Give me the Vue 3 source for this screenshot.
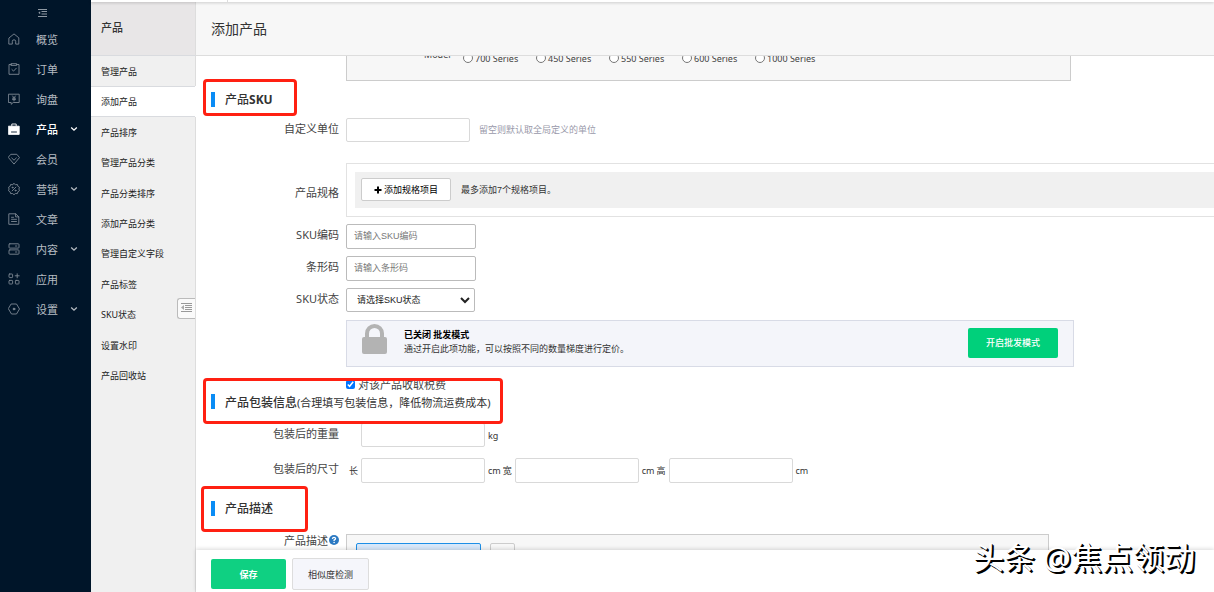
<script setup>
import { ref } from 'vue'

const menu = [
  { name: '概览', icon: 'home' },
  { name: '订单', icon: 'order' },
  { name: '询盘', icon: 'inquiry' },
  { name: '产品', icon: 'product', more: true, active: true },
  { name: '会员', icon: 'member' },
  { name: '营销', icon: 'marketing', more: true },
  { name: '文章', icon: 'article' },
  { name: '内容', icon: 'content', more: true },
  { name: '应用', icon: 'apps' },
  { name: '设置', icon: 'settings', more: true }
]
const subMenu = ['管理产品', '添加产品', '产品排序', '管理产品分类', '产品分类排序', '添加产品分类', '管理自定义字段', '产品标签', 'SKU状态', '设置水印', '产品回收站']
const models = ['700 Series', '450 Series', '550 Series', '600 Series', '1000 Series']
const model = ref('')
const taxed = ref(true)
</script>

<template>
  <div class="app">
    <aside class="side">
      <button class="fold" type="button" aria-label="收起菜单">
        <svg width="9" height="8" viewBox="0 0 9 8" fill="none" stroke="currentColor"><path d="M0 .5h9M3.500 2.500H9M3.500 5H9M0 7.500h9"/><path d="M2.200 2.200v3L.3 3.700z" fill="currentColor" stroke="none"/></svg>
      </button>
      <nav>
        <a v-for="m in menu" :key="m.name" href="#" class="item" :class="{ on: m.active }">
          <svg class="ico" viewBox="0 0 12 12" fill="none" stroke="currentColor" stroke-width=".9" stroke-linejoin="round" stroke-linecap="round">
            <path v-if="m.icon === 'home'" d="M1.200 4.800L6 .9l4.800 3.900v6.300H7.700V8.300Q7.700 6.800 6 6.800T4.300 8.300v2.800H1.200z"/>
            <g v-else-if="m.icon === 'order'"><path d="M3.300 1.500H1v9.800h10V1.500H8.700M3.300.7h5.400v1.700H3.300zM3.900 6.500l1.600 1.600 2.800-2.900"/></g>
            <g v-else-if="m.icon === 'inquiry'"><path d="M.8 1.200h10.400v8.300H5.200L3.200 11.300V9.500H.8zM4.600 3l1.400 1.900L7.400 3M6 4.900v3M4.500 5.200h3M4.500 6.600h3"/></g>
            <g v-else-if="m.icon === 'product'"><path d="M.8 3.200h10.400v8.200H.8z" fill="currentColor"/><path d="M3.800 3V1h4.400v2"/><path d="M3.500 9h5" stroke="#001529"/></g>
            <g v-else-if="m.icon === 'member'"><path d="M3.200 1.300h5.600L11.500 4.600 6 11.100.5 4.600zM3.700 5L6 7.200 8.300 5"/></g>
            <g v-else-if="m.icon === 'marketing'"><path d="M6 .5l1.500 1.200 1.900-.2.500 1.800 1.600 1-.6 1.700.6 1.700-1.600 1.100-.5 1.800-1.900-.1L6 11.700l-1.500-1.200-1.900.1-.5-1.800L.5 7.700 1.100 6 .5 4.300l1.600-1 .5-1.800 1.900.2zM4.100 7.900l3.800-3.800"/><circle cx="4.500" cy="4.600" r=".5"/><circle cx="7.500" cy="7.500" r=".5"/></g>
            <g v-else-if="m.icon === 'article'"><path d="M1.200.8h6.500l3.100 3v7.500H1.200zM7.600.9v3h3.100M3.500 4.300h2M3.500 6.300h5M3.500 8.500h5"/></g>
            <g v-else-if="m.icon === 'content'"><rect x="1" y=".8" width="10" height="4.300" rx=".8"/><rect x="1" y="6.900" width="10" height="4.300" rx=".8"/><path d="M7.500 3h1.300M7.500 9h1.300"/></g>
            <g v-else-if="m.icon === 'apps'"><rect x="1" y="1" width="3.600" height="3.600" rx=".7"/><rect x="1" y="7.400" width="3.600" height="3.600" rx=".7"/><rect x="7.400" y="7.400" width="3.600" height="3.600" rx=".7"/><path d="M9.200.8v4M7.200 2.800h4"/></g>
            <g v-else><path d="M3.500 1h5L11.500 6 8.500 11h-5L.5 6z"/><circle cx="6" cy="6" r=".9" fill="currentColor"/></g>
          </svg>
          <span class="txt">{{ m.name }}</span>
          <svg v-if="m.more" class="arr" viewBox="0 0 8 8" fill="none" stroke="currentColor" stroke-width="1.300"><path d="M1.200 2.500L4 5.200l2.800-2.700"/></svg>
        </a>
      </nav>
    </aside>

    <div class="right">
      <div class="strip"><i></i></div>
      <div class="body">
        <aside class="sub">
          <h2>产品</h2>
          <nav>
            <a v-for="s in subMenu" :key="s" href="#" :class="{ on: s === '添加产品' }">{{ s }}</a>
          </nav>
          <button class="tab" type="button" aria-label="收起">
            <svg width="11" height="9" viewBox="0 0 11 9" fill="none" stroke="#999"><path d="M0 .5h11M4 2.500h7M4 4.500h7M4 6.500h7M0 8.500h11"/><path d="M3 2v5L0 4.500z" fill="#aaa" stroke="none"/></svg>
          </button>
        </aside>

        <main class="main">
          <h1>添加产品</h1>
          <form class="form" @submit.prevent>
            <div class="row attrs">
              <fieldset class="panel">
                <span class="model">Model</span>
                <label v-for="m in models" :key="m"><input v-model="model" type="radio" name="model" :value="m">{{ m }}</label>
              </fieldset>
            </div>

            <h3>产品<b>SKU</b><i class="mark sku"></i></h3>

            <div class="row">
              <label class="lab" for="unit">自定义单位</label>
              <div class="ctl"><input id="unit" class="inp" type="text"><span class="hint">留空则默认取全局定义的单位</span></div>
            </div>

            <div class="row spec">
              <span class="lab">产品规格</span>
              <div class="specbox">
                <div class="specin">
                  <button type="button" class="add"><svg width="8" height="8" viewBox="0 0 8 8" stroke="#000" stroke-width="2"><path d="M4 .5v7M.5 4h7"/></svg>添加规格项目</button>
                  <span>最多添加7个规格项目。</span>
                </div>
              </div>
            </div>

            <div class="row g7">
              <label class="lab" for="code">SKU编码</label>
              <input id="code" class="inp wide" type="text" placeholder="请输入SKU编码">
            </div>
            <div class="row g7">
              <label class="lab" for="bar">条形码</label>
              <input id="bar" class="inp wide" type="text" placeholder="请输入条形码">
            </div>
            <div class="row g7">
              <label class="lab" for="state">SKU状态</label>
              <div class="sel">
                <select id="state"><option>请选择SKU状态</option></select>
                <svg width="10" height="7" viewBox="0 0 10 7" fill="none" stroke="#222" stroke-width="2"><path d="M1 1l4 4 4-4"/></svg>
              </div>
            </div>

            <div class="row promo">
              <div class="sale">
                <svg class="lock" viewBox="0 0 25 30"><path d="M5 14V9.500a7.500 7.500 0 0 1 15 0V14" fill="none" stroke="#b3b3b3" stroke-width="4"/><rect y="13" width="25" height="17" rx="2" fill="#b3b3b3"/></svg>
                <p><b>已关闭 批发模式</b><br>通过开启此项功能，可以按照不同的数量梯度进行定价。</p>
                <button type="button" class="open">开启批发模式</button>
              </div>
            </div>

            <div class="row tax">
              <label><input v-model="taxed" type="checkbox">对该产品收取税费</label>
            </div>

            <h3 class="pack">产品包装信息<small>(合理填写包装信息，降低物流运费成本)</small><i class="mark package"></i></h3>

            <div class="row weight">
              <label class="lab" for="kg">包装后的重量</label>
              <div class="ctl"><span class="pre"></span><input id="kg" class="inp" type="text"><span class="u">kg</span></div>
            </div>
            <div class="row size">
              <label class="lab" for="len">包装后的尺寸</label>
              <div class="ctl">
                <span class="pre">长</span><input id="len" class="inp" type="text"><span class="u">cm</span>
                <label class="d" for="wid">宽</label><input id="wid" class="inp" type="text"><span class="u">cm</span>
                <label class="d" for="hei">高</label><input id="hei" class="inp" type="text"><span class="u">cm</span>
              </div>
            </div>

            <h3 class="g7">产品描述<i class="mark desc"></i></h3>

            <div class="row editor">
              <span class="lab">产品描述<svg width="10" height="10" viewBox="0 0 10 10"><circle cx="5" cy="5" r="5" fill="#2b79c2"/><path d="M3.400 3.800Q3.600 2.300 5 2.300T6.600 3.600Q6.600 4.400 5.100 5.100V6" fill="none" stroke="#fff" stroke-width="1.300"/><circle cx="5.100" cy="7.500" r=".8" fill="#fff"/></svg></span>
              <div class="edit"><span class="chosen"></span><span class="plain"></span></div>
            </div>
          </form>
          <footer>
            <button type="button" class="save">保存</button>
            <button type="button" class="check">相似度检测</button>
          </footer>
        </main>
      </div>
    </div>
    <div class="wm">头条 @焦点领动</div>
  </div>
</template>

<style>
body { margin: 0; overflow: hidden; }
</style>

<style scoped>
* { box-sizing: border-box; }
.app { position: relative; display: grid; grid-template-columns: 91px 1fr; height: 100vh; overflow: hidden; background: #fff; color: #333; font-family: "Noto Sans", "Noto Sans CJK SC", sans-serif; font-size: 9px; }
button, input, select { font-family: "Liberation Sans", "Noto Sans CJK SC", sans-serif; font-size: 9px; padding: 0; margin: 0; }
h1, h2, h3, p { margin: 0; font-weight: 400; }
a { text-decoration: none; }
.side { background: #001529; color: #a6adb4; }
.fold { display: flex; align-items: center; justify-content: center; width: 85px; height: 24px; padding-top: 2px; border: 0; background: none; color: #8f99a3; }
.item { display: flex; align-items: center; height: 30px; padding-left: 8px; color: #b5bcc2; font-size: 11px; }
.ico { width: 12px; height: 12px; margin-right: 16px; color: #7e8994; }
.txt { width: 34px; padding-bottom: 1px; }
.arr { width: 8px; height: 8px; }
.item.on, .item.on .ico { color: #fff; }
.item.on .txt { font-weight: 500; }

.right { display: flex; flex-direction: column; min-width: 0; min-height: 0; }
.strip { position: relative; z-index: 2; height: 2px; background: #fff; box-shadow: 0 1px 3px rgba(0,0,0,.2); }
.strip i { display: block; width: 137px; height: 2px; border-right: 1px solid #ddd; }
.body { flex: 1; display: grid; grid-template-columns: 105px 1fr; min-height: 0; }
.sub { position: relative; background: #f0f0f0; }
.sub h2 { height: 54px; padding-left: 10px; line-height: 52px; font-size: 11px; font-weight: 500; background: #e8e6e7; border-bottom: 1px solid #d9dbdf; border-right: 1px solid #ddd; }
.sub nav { display: flex; flex-direction: column; height: 335px; }
.sub nav a { flex: 1; display: flex; align-items: center; padding-left: 10px; color: #222; border-right: 1px solid #ddd; }
.sub nav a.on { background: #fff; box-shadow: inset 0 1px #d9dbdf, inset 0 -1px #d9dbdf; border-right-color: #fff; }
.sub::after { content: ""; position: absolute; right: 0; top: 389px; bottom: 0; border-right: 1px solid #ddd; }
.tab { position: absolute; right: 1px; top: 296px; display: flex; justify-content: flex-end; width: 18px; height: 21px; padding: 4px 3px; background: #fafafa; border: 1px solid #bbb; border-right: 0; border-radius: 3px 0 0 3px; }

.main { display: flex; flex-direction: column; min-width: 0; min-height: 0; }
h1 { flex: none; position: relative; z-index: 1; height: 54px; padding-left: 15px; line-height: 54px; font-size: 14px; background: #f7f7f7; border-bottom: 1px solid #ddd; }
.form { flex: 1; min-height: 0; overflow: hidden; }
.row { display: grid; grid-template-columns: 143px minmax(0, 1fr); column-gap: 7px; }
.row > :only-child { grid-column: 2; }
.lab { text-align: right; font-size: 11px; line-height: 21px; color: #444; }
.g7 { margin-top: 7px; }
.panel { display: flex; align-items: center; width: 100%; max-width: 725px; height: 60px; margin: -35px 0 0; padding: 14px 0 0 77px; border: 1px solid #ccc; background: #f7f7f7; color: #444; }
.model { width: 39px; padding-bottom: 8px; }
.panel label { display: flex; align-items: center; width: 73px; white-space: nowrap; }
.panel input { flex: none; width: 10px; height: 10px; margin-right: 2px; }
h3 { position: relative; display: flex; align-items: center; height: 36px; margin-bottom: 1px; padding-left: 15px; font-size: 12px; font-weight: 500; color: #333; }
h3::before { content: ""; width: 4px; height: 15px; margin-right: 10px; background: #0a8cf5; }
h3 b { font-weight: 700; }
small { font-size: 11px; font-weight: 400; }
.mark { position: absolute; border: 3px solid #ff2012; border-radius: 4px; z-index: 1; }
.sku { left: 7px; top: -2px; width: 94px; height: 37px; }
.package { left: 7px; top: -13px; width: 300px; height: 46px; }
.desc { left: 5px; top: -4px; width: 107px; height: 46px; }
.ctl { display: flex; align-items: center; }
.inp { width: 124px; height: 24px; background: #fff; border: 1px solid #d9d9d9; border-radius: 2px; }
.wide { width: 130px; height: 25px; padding: 0 7px 1px; border-color: #bbb; }
.inp::placeholder { color: #777; opacity: 1; }
.hint { margin-left: 9px; padding-bottom: 2px; color: #99a; }
.spec { margin-top: 21px; align-items: center; }
.spec .lab { padding-top: 4px; }
.specbox { height: 54px; padding: 8px 0 8px 8px; border: 1px solid #e2e2e2; border-right: 0; }
.specin { display: flex; align-items: center; height: 36px; padding: 0 0 1px 6px; background: #f0f0f0; }
.specin > span { margin-left: 10px; font-family: "Liberation Sans", "Noto Sans CJK SC", sans-serif; }
.add { display: flex; align-items: center; justify-content: center; gap: 2px; width: 90px; height: 23px; background: #fff; border: 1px solid #ccc; border-radius: 2px; color: #000; }
.sel { position: relative; width: 129px; height: 24px; }
.sel select { appearance: none; width: 100%; height: 100%; padding-left: 10px; border: 1px solid #bbb; border-radius: 2px; background: #fff; color: #222; }
.sel svg { position: absolute; right: 5px; top: 9px; pointer-events: none; }
.promo { margin-top: 8px; }
.sale { display: flex; align-items: center; width: 100%; max-width: 728px; height: 47px; padding: 0 15px; border: 1px solid #d8dbe6; background: #f4f5fa; }
.lock { width: 25px; height: 30px; margin: 0 17px 9px 0; }
.sale p { flex: 1; line-height: 14px; padding-bottom: 3px; }
.sale b { color: #000; }
.open { width: 90px; height: 30px; margin-bottom: 2px; background: #00d07b; border: 0; border-radius: 2px; color: #fff; font-weight: 500; }
.tax { margin-top: 10px; }
.tax label { display: flex; align-items: center; height: 14px; font-size: 11px; color: #444; }
.tax input { width: 9px; height: 9px; margin-right: 3px; }
h3.pack { height: 21px; }
.weight { margin-top: 11px; }
.size { margin-top: 11px; }
.size .inp { height: 25px; }
.pre { width: 15px; padding-left: 3px; }
.u { margin-left: 3px; }
.d { width: 12px; margin-left: 2px; }
.editor { margin-top: 8px; }
.editor .lab { display: flex; justify-content: flex-end; align-items: flex-start; line-height: 14px; gap: 1px; }
.editor svg { margin-top: 1px; }
.edit { display: flex; gap: 9px; width: 100%; max-width: 703px; height: 60px; padding: 8px 9px; border: 1px solid #ccc; background: #f7f7f7; }
.chosen { width: 125px; border: 1px solid #1e8fe6; border-radius: 2px; background: #d8e8fa; }
.plain { width: 25px; border: 1px solid #ccc; border-radius: 2px; }
footer { flex: none; position: relative; z-index: 2; display: flex; align-items: center; gap: 6px; height: 42px; padding: 6px 0 0 15px; margin: 0; background: #fff; box-shadow: 0 -1px 4px rgba(0,0,0,.15); }
.save { width: 75px; height: 30px; background: #0fd082; border: 0; border-radius: 2px; color: #fff; font-weight: 700; }
.check { width: 77px; height: 32px; background: #f5f6fb; border: 1px solid #ddd; border-radius: 2px; color: #333; }
.wm { position: absolute; z-index: 3; right: 19px; bottom: 12px; font-size: 31px; line-height: 46px; color: #fff; text-shadow: 1px 1px 0 #000, 2px 2px 0 #000; white-space: nowrap; }
</style>
